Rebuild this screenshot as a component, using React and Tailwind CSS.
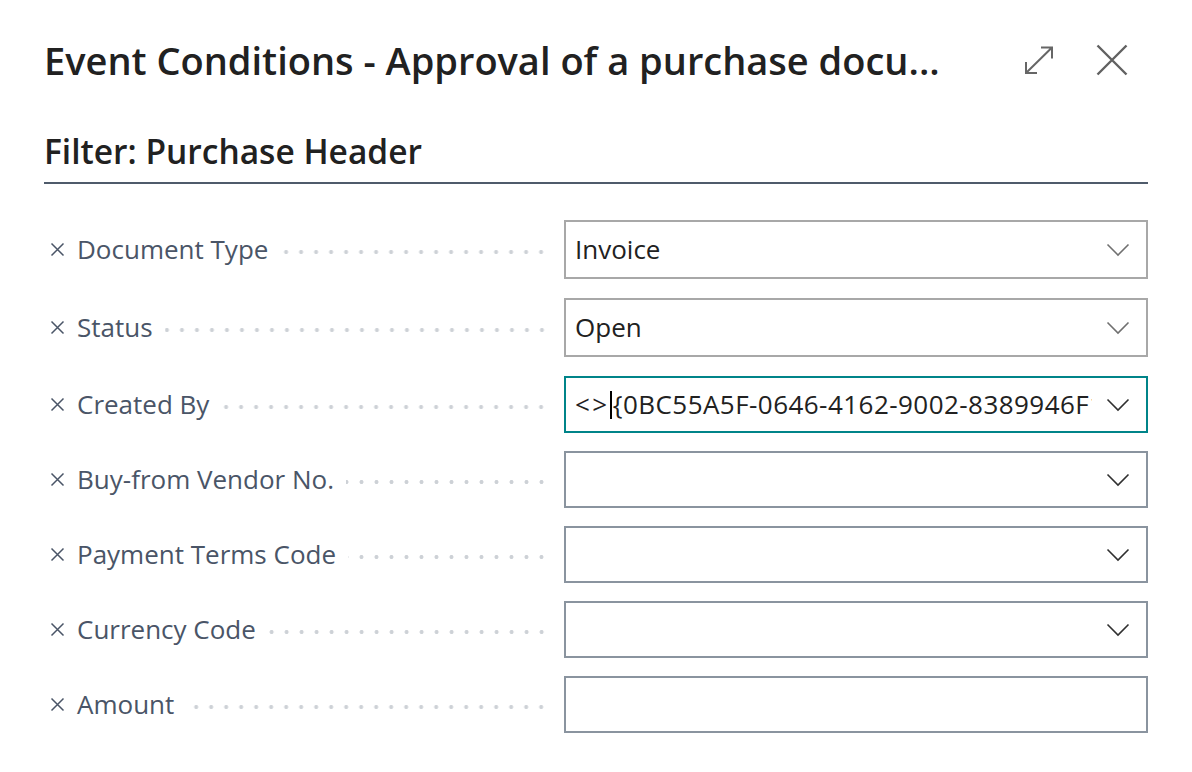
import React from "react";

const rows = [
  { label: "Document Type", value: "Invoice", kind: "select", tone: "muted" },
  { label: "Status", value: "Open", kind: "select", tone: "muted" },
  { label: "Created By", value: "<>{0BC55A5F-0646-4162-9002-8389946F1F2A}", kind: "select", tone: "focus" },
  { label: "Buy-from Vendor No.", value: "", kind: "select", tone: "plain" },
  { label: "Payment Terms Code", value: "", kind: "select", tone: "plain" },
  { label: "Currency Code", value: "", kind: "select", tone: "plain" },
  { label: "Amount", value: "", kind: "text", tone: "plain" },
];

function Chevron({ color }) {
  return (
    <svg width="24" height="14" viewBox="0 0 24 14" fill="none" className="shrink-0">
      <path d="M1.5 1.5 L12 12 L22.5 1.5" stroke={color} strokeWidth="1.6" />
    </svg>
  );
}

function RemoveIcon() {
  return (
    <svg width="15" height="15" viewBox="0 0 15 15" fill="none" className="shrink-0">
      <path d="M1.5 1.5 L13.5 13.5 M13.5 1.5 L1.5 13.5" stroke="#4a5567" strokeWidth="1.5" />
    </svg>
  );
}

function FilterRow({ row, index }) {
  const border =
    row.tone === "focus"
      ? "border-[#008489]"
      : row.tone === "muted"
      ? "border-[#a8a8a8]"
      : "border-[#8a949f]";
  const chevronColor = row.tone === "muted" ? "#707070" : "#303030";
  const boxHeight = index < 2 ? "h-[59px]" : "h-[57px]";
  const gap = index < 2 ? "mb-[19px]" : "mb-[18px]";
  return (
    <div className={`flex items-center ${gap}`}>
      <div className="flex items-center w-[520px] pl-[6px] pr-[15px]">
        <RemoveIcon />
        <span className="ml-[12px] text-[26px] text-[#4a5567] whitespace-nowrap">{row.label}</span>
        <div className="flex-1 ml-[12px] h-[6px] mt-[4px] bg-[radial-gradient(circle,#cdd1d6_1.7px,transparent_2.3px)] bg-[length:15px_6px] bg-repeat-x bg-right" />
      </div>
      <div
        className={`w-[584px] ${boxHeight} border-2 ${border} flex items-center pl-[9px] pr-[16px] bg-white`}
      >
        <div className="flex-1 min-w-0 mr-[14px] overflow-hidden whitespace-nowrap text-[26px] text-[#212121] flex items-center">
          {row.tone === "focus" ? (
            <>
              <span className="tracking-[2.5px]">{"<>"}</span>
              <span className="inline-block shrink-0 w-[2px] h-[28px] bg-black mr-[1px]" />
              <span className="tracking-[0.45px]">{row.value.slice(2)}</span>
            </>
          ) : (
            <span>{row.value}</span>
          )}
        </div>
        {row.kind === "select" && <Chevron color={chevronColor} />}
      </div>
    </div>
  );
}

export default function App() {
  return (
    <div className="w-[1192px] h-[772px] overflow-hidden bg-white font-['Open_Sans','Noto_Sans',sans-serif]">
      <div className="pl-[44px] pr-[44px] pt-[32px]">
        <header className="flex items-center h-[56px]">
          <h1 className="flex-1 text-[38px] font-semibold text-[#212121] whitespace-nowrap">
            Event Conditions - Approval of a purchase docu...
          </h1>
          <button className="w-[32px] h-[32px] flex items-center justify-center mr-[40px]">
            <svg width="30" height="29" viewBox="0 0 30 29" fill="none">
              <path d="M2 27 L28 1.5 M17 1.5 H28 V12.5 M2 16 V27 H13" stroke="#666" strokeWidth="2" />
            </svg>
          </button>
          <button className="w-[34px] h-[34px] flex items-center justify-center mr-[19px]">
            <svg width="32" height="32" viewBox="0 0 32 32" fill="none">
              <path d="M1.5 1.5 L30.5 30.5 M30.5 1.5 L1.5 30.5" stroke="#616161" strokeWidth="2.4" />
            </svg>
          </button>
        </header>
        <h2 className="mt-[41px] text-[33.5px] font-semibold text-[#212121] leading-[44px] pb-[9px] border-b-2 border-[#4f5b6b]">
          Filter: Purchase Header
        </h2>
        <div className="mt-[36px]">
          {rows.map((row, i) => (
            <FilterRow key={row.label} row={row} index={i} />
          ))}
        </div>
      </div>
    </div>
  );
}
